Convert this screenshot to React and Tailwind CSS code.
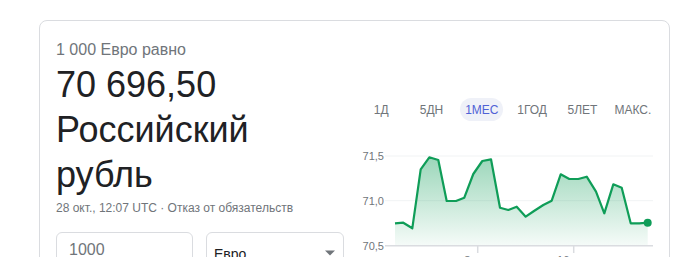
import React from "react";

const PTS = [
  [395, 223.3], [403.3, 222.7], [412.3, 228.3], [420.7, 169.3], [429.3, 157.3],
  [438.3, 160], [446.7, 201], [456, 201], [464.3, 197.7], [473.3, 174],
  [482.3, 161], [491, 159.3], [500, 207.7], [508.3, 210], [516.7, 206.7],
  [525.7, 216.7], [534, 211], [543.3, 205], [551.7, 200.7], [560.7, 174.3],
  [569.3, 179], [578.3, 179], [586.7, 176.7], [596, 191.7], [604.3, 213.3],
  [613.3, 184.3], [621.7, 187.7], [630.7, 223.3], [639.3, 223.3], [647.7, 222.7],
];

function Chart() {
  const ox = 356;
  const oy = 130;
  const pts = PTS.map(([x, y]) => [x - ox, y - oy]);
  const line = pts.map((p) => p.join(",")).join(" ");
  const baseY = 245.7 - oy;
  const area =
    `${pts[0][0]},${baseY} ` + line + ` ${pts[pts.length - 1][0]},${baseY}`;
  const last = pts[pts.length - 1];
  return (
    <svg width="302" height="140" className="block overflow-visible" style={{ fontFamily: "'Liberation Sans', Arial, sans-serif" }}>
      <defs>
        <linearGradient id="g" x1="0" y1="26" x2="0" y2={baseY} gradientUnits="userSpaceOnUse">
          <stop offset="0" stopColor="#0f9d58" stopOpacity="0.42" />
          <stop offset="1" stopColor="#0f9d58" stopOpacity="0.04" />
        </linearGradient>
      </defs>
      <line x1="29" x2="297" y1="26" y2="26" stroke="#f1f3f4" strokeWidth="1" />
      <line x1="29" x2="297" y1="70.7" y2="70.7" stroke="#f1f3f4" strokeWidth="1" />
      <polygon points={area} fill="url(#g)" />
      <polyline points={line} fill="none" stroke="#0f9d58" strokeWidth="2.2" strokeLinejoin="round" />
      <line x1="29" x2="297" y1={baseY} y2={baseY} stroke="#dadce0" strokeWidth="1.5" />
      <line x1={477.7 - ox} x2={477.7 - ox} y1={baseY} y2={253 - oy} stroke="#dadce0" strokeWidth="1.5" />
      <line x1={573.7 - ox} x2={573.7 - ox} y1={baseY} y2={253 - oy} stroke="#dadce0" strokeWidth="1.5" />
      <circle cx={last[0]} cy={last[1]} r="4" fill="#0f9d58" />
      <g fill="#70757a" fontSize="11">
        <text x="28" y="30" textAnchor="end">71,5</text>
        <text x="28" y="75" textAnchor="end">71,0</text>
        <text x="28" y="119.5" textAnchor="end">70,5</text>
        <text x={477.7 - ox} y="134" textAnchor="middle">8 окт.</text>
        <text x={573.7 - ox} y="134" textAnchor="middle">16 окт.</text>
      </g>
    </svg>
  );
}

export default function App() {
  const tabs = ["1Д", "5ДН", "1МЕС", "1ГОД", "5ЛЕТ", "МАКС."];
  return (
    <div className="w-[695px] h-[257px] overflow-hidden bg-white font-['Liberation_Sans',Arial,sans-serif]">
      <div className="ml-[39px] mt-[20px] w-[631px] h-[300px] rounded-lg border border-[#dadce0] pl-4 pr-[10px] pt-[17px] flex">
        <div className="w-[289px] shrink-0">
          <div className="text-[16px] leading-6 text-[#70757a]">1 000 Евро равно</div>
          <div className="text-[36px] leading-[45px] text-[#202124]">
            <div>70 696,50</div>
            <div>Российский</div>
            <div>рубль</div>
          </div>
          <div className="mt-[3px] text-[12px] leading-4 text-[#70757a]">
            28 окт., 12:07 UTC · Отказ от обязательств
          </div>
          <div className="mt-[16px] flex gap-[13px]">
            <div className="w-[137px] h-[44px] rounded-md border border-[#dadce0] pl-3 pt-[5px] text-[16px] leading-6 text-[#70757a]">
              1000
            </div>
            <div className="w-[138px] h-[44px] rounded-md border border-[#dadce0] pl-[7px] pr-[8px] pt-[11px] flex items-start justify-between text-[14px] leading-5 text-[#202124]">
              <span>Евро</span>
              <svg width="10" height="6" className="mt-[6px]" viewBox="0 0 10 5">
                <path d="M0 0 L10 0 L5 5 Z" fill="#70757a" />
              </svg>
            </div>
          </div>
        </div>
        <div className="ml-[11px] w-[302px] shrink-0">
          <div className="mt-[60px] h-[23px] grid grid-cols-6 text-[12px] text-[#70757a]">
            {tabs.map((t) => (
              <div key={t} className="flex items-center justify-center">
                {t === "1МЕС" ? (
                  <span className="h-[23px] px-[5px] rounded-full bg-[#eff1f8] text-[#4f62d6] flex items-center">
                    {t}
                  </span>
                ) : (
                  <span>{t}</span>
                )}
              </div>
            ))}
          </div>
          <div className="mt-[9px]">
            <Chart />
          </div>
        </div>
      </div>
    </div>
  );
}
